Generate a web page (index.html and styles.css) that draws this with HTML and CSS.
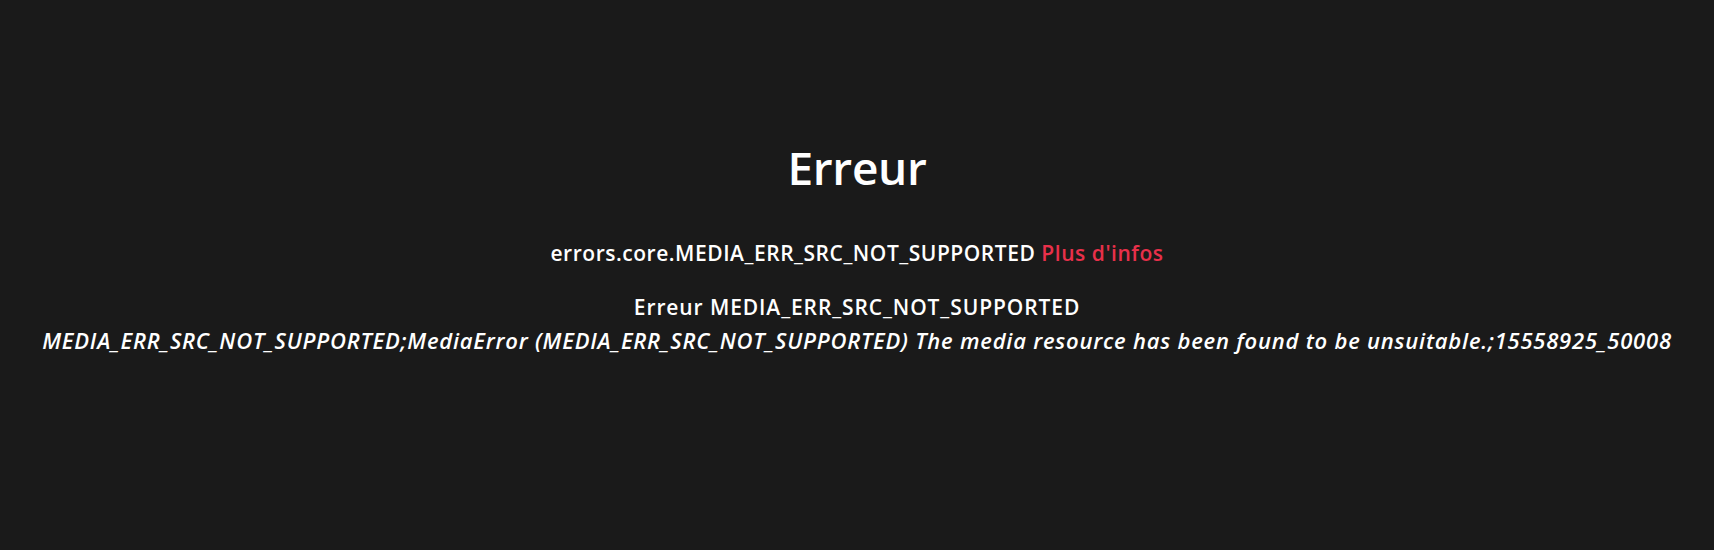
FILE: index.html
```html
<!DOCTYPE html>
<html lang="fr">
<head>
<meta charset="utf-8">
<title>Erreur</title>
<link rel="stylesheet" href="styles.css">
</head>
<body>
<main class="error-page">
  <h1 class="error-title">Erreur</h1>
  <p class="error-code">errors.core.MEDIA_ERR_SRC_NOT_SUPPORTED <a class="error-link" href="#">Plus d'infos</a></p>
  <div class="error-details">
    <p class="error-name">Erreur MEDIA_ERR_SRC_NOT_SUPPORTED</p>
    <p class="error-message">MEDIA_ERR_SRC_NOT_SUPPORTED;MediaError (MEDIA_ERR_SRC_NOT_SUPPORTED) The media resource has been found to be unsuitable.;15558925_50008</p>
  </div>
</main>
</body>
</html>
```

FILE: styles.css
```css
html, body {
  margin: 0;
  padding: 0;
  height: 100%;
  background: #1a1a1a;
}

body {
  color: #ffffff;
  font-family: "Open Sans", "Noto Sans", "Liberation Sans", sans-serif;
}

.error-page {
  display: flex;
  flex-direction: column;
  align-items: center;
  text-align: center;
  padding-top: 139px;
}

.error-title {
  margin: 0;
  font-size: 46px;
  font-weight: 600;
  letter-spacing: -0.3px;
  line-height: 56px;
}

.error-code {
  margin: 42px 0 0;
  font-size: 21px;
  font-weight: 600;
  letter-spacing: 0.53px;
  line-height: 32px;
  white-space: nowrap;
}

.error-link {
  color: #e8304a;
  text-decoration: none;
}

.error-details {
  margin-top: 22px;
}

.error-name,
.error-message {
  margin: 0;
  font-size: 21px;
  font-weight: 600;
  line-height: 33px;
  white-space: nowrap;
}

.error-name {
  letter-spacing: 0.9px;
}

.error-message {
  font-size: 22px;
  font-style: italic;
  letter-spacing: 0.78px;
}
```
